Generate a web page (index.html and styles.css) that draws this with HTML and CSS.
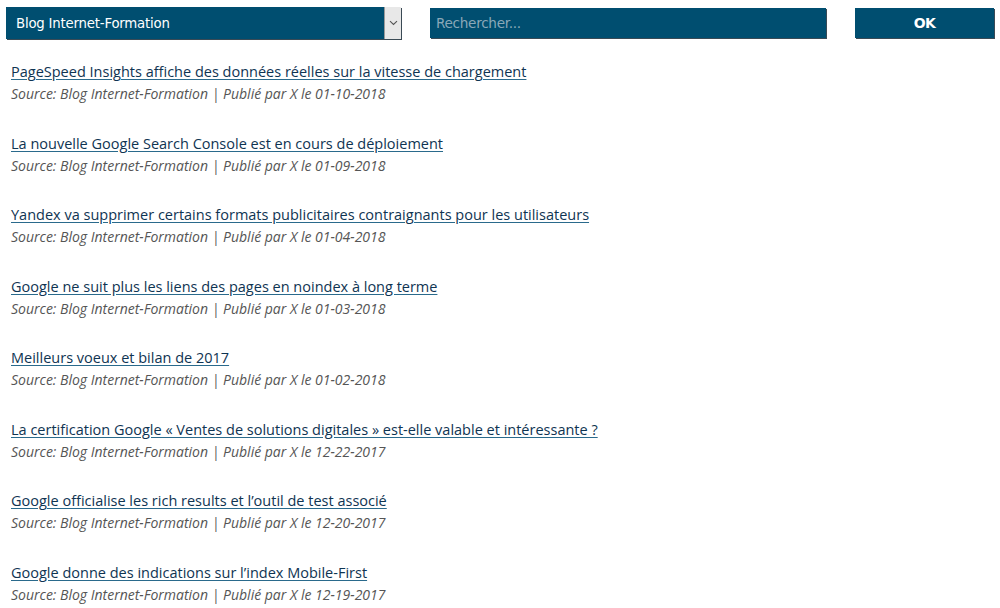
FILE: index.html
```html
<!DOCTYPE html>
<html lang="fr">
<head>
<meta charset="utf-8">
<title>Blog Internet-Formation</title>
<link rel="stylesheet" href="styles.css">
</head>
<body>
<form class="toolbar">
  <div class="select">
    <span class="select-label">Blog Internet-Formation</span>
    <span class="select-arrow">
      <svg width="9" height="6" viewBox="0 0 9 6"><path d="M1 1.2 L4.5 4.5 L8 1.2" fill="none" stroke="#555" stroke-width="1.1"/></svg>
    </span>
  </div>
  <div class="search"><span class="placeholder">Rechercher...</span></div>
  <button class="ok" type="button">OK</button>
</form>
<ul class="posts">
  <li class="post"><a class="title" href="#">PageSpeed Insights affiche des données réelles sur la vitesse de chargement</a><div class="meta">Source: Blog Internet-Formation | Publié par X le 01-10-2018</div></li>
  <li class="post"><a class="title" href="#">La nouvelle Google Search Console est en cours de déploiement</a><div class="meta">Source: Blog Internet-Formation | Publié par X le 01-09-2018</div></li>
  <li class="post"><a class="title" href="#">Yandex va supprimer certains formats publicitaires contraignants pour les utilisateurs</a><div class="meta">Source: Blog Internet-Formation | Publié par X le 01-04-2018</div></li>
  <li class="post"><a class="title" href="#">Google ne suit plus les liens des pages en noindex à long terme</a><div class="meta">Source: Blog Internet-Formation | Publié par X le 01-03-2018</div></li>
  <li class="post"><a class="title" href="#">Meilleurs voeux et bilan de 2017</a><div class="meta">Source: Blog Internet-Formation | Publié par X le 01-02-2018</div></li>
  <li class="post"><a class="title" href="#">La certification Google « Ventes de solutions digitales » est-elle valable et intéressante ?</a><div class="meta">Source: Blog Internet-Formation | Publié par X le 12-22-2017</div></li>
  <li class="post"><a class="title" href="#">Google officialise les rich results et l’outil de test associé</a><div class="meta">Source: Blog Internet-Formation | Publié par X le 12-20-2017</div></li>
  <li class="post"><a class="title" href="#">Google donne des indications sur l’index Mobile-First</a><div class="meta">Source: Blog Internet-Formation | Publié par X le 12-19-2017</div></li>
</ul>
</body>
</html>
```

FILE: styles.css
```css
html, body {
  margin: 0;
  padding: 0;
  background: #fff;
}
body {
  font-family: "Open Sans", "Lato", sans-serif;
  overflow: hidden;
}
.toolbar {
  display: flex;
  align-items: flex-start;
  padding: 7px 6px 0 6px;
  margin: 0;
}
.select {
  width: 395px;
  height: 32px;
  background: #004e70;
  display: flex;
  align-items: center;
  justify-content: space-between;
  box-shadow: 1px 1px 0 #3a4a55;
  box-sizing: border-box;
}
.select-label {
  color: #fff;
  font-family: "DejaVu Sans", sans-serif;
  font-size: 13.3px;
  letter-spacing: -0.2px;
  padding-left: 10px;
}
.select-arrow {
  width: 17px;
  height: 32px;
  background: #e8e8e8;
  border-left: 1px solid #9a9a9a;
  box-sizing: border-box;
  display: flex;
  align-items: center;
  justify-content: center;
}
.search {
  width: 396px;
  height: 30px;
  margin-top: 1px;
  margin-left: 29px;
  background: #004e70;
  box-shadow: 1px 1px 0 #3a4a55;
  display: flex;
  align-items: center;
}
.placeholder {
  color: #8aa8b8;
  font-family: "DejaVu Sans", sans-serif;
  font-size: 13.6px;
  letter-spacing: -0.3px;
  padding-left: 6px;
}
.ok {
  width: 139px;
  height: 30px;
  margin-top: 1px;
  margin-left: 29px;
  background: #004e70;
  border: 0;
  box-shadow: 1px 1px 0 #3a4a55;
  color: #fff;
  font-family: "DejaVu Sans", sans-serif;
  font-weight: bold;
  font-size: 14px;
  letter-spacing: -0.6px;
  padding: 0;
}
.posts {
  list-style: none;
  margin: 22px 0 0 0;
  padding: 0 0 0 11px;
}
.post {
  margin-bottom: 27.5px;
}
.title {
  display: block;
  width: max-content;
  font-size: 14.5px;
  line-height: 22px;
  color: #0f3452;
  text-decoration: underline;
  text-decoration-color: #2a6a8c;
  text-underline-offset: 2px;
}
.meta {
  font-size: 14px;
  line-height: 22px;
  font-style: italic;
  color: #555;
}
```
